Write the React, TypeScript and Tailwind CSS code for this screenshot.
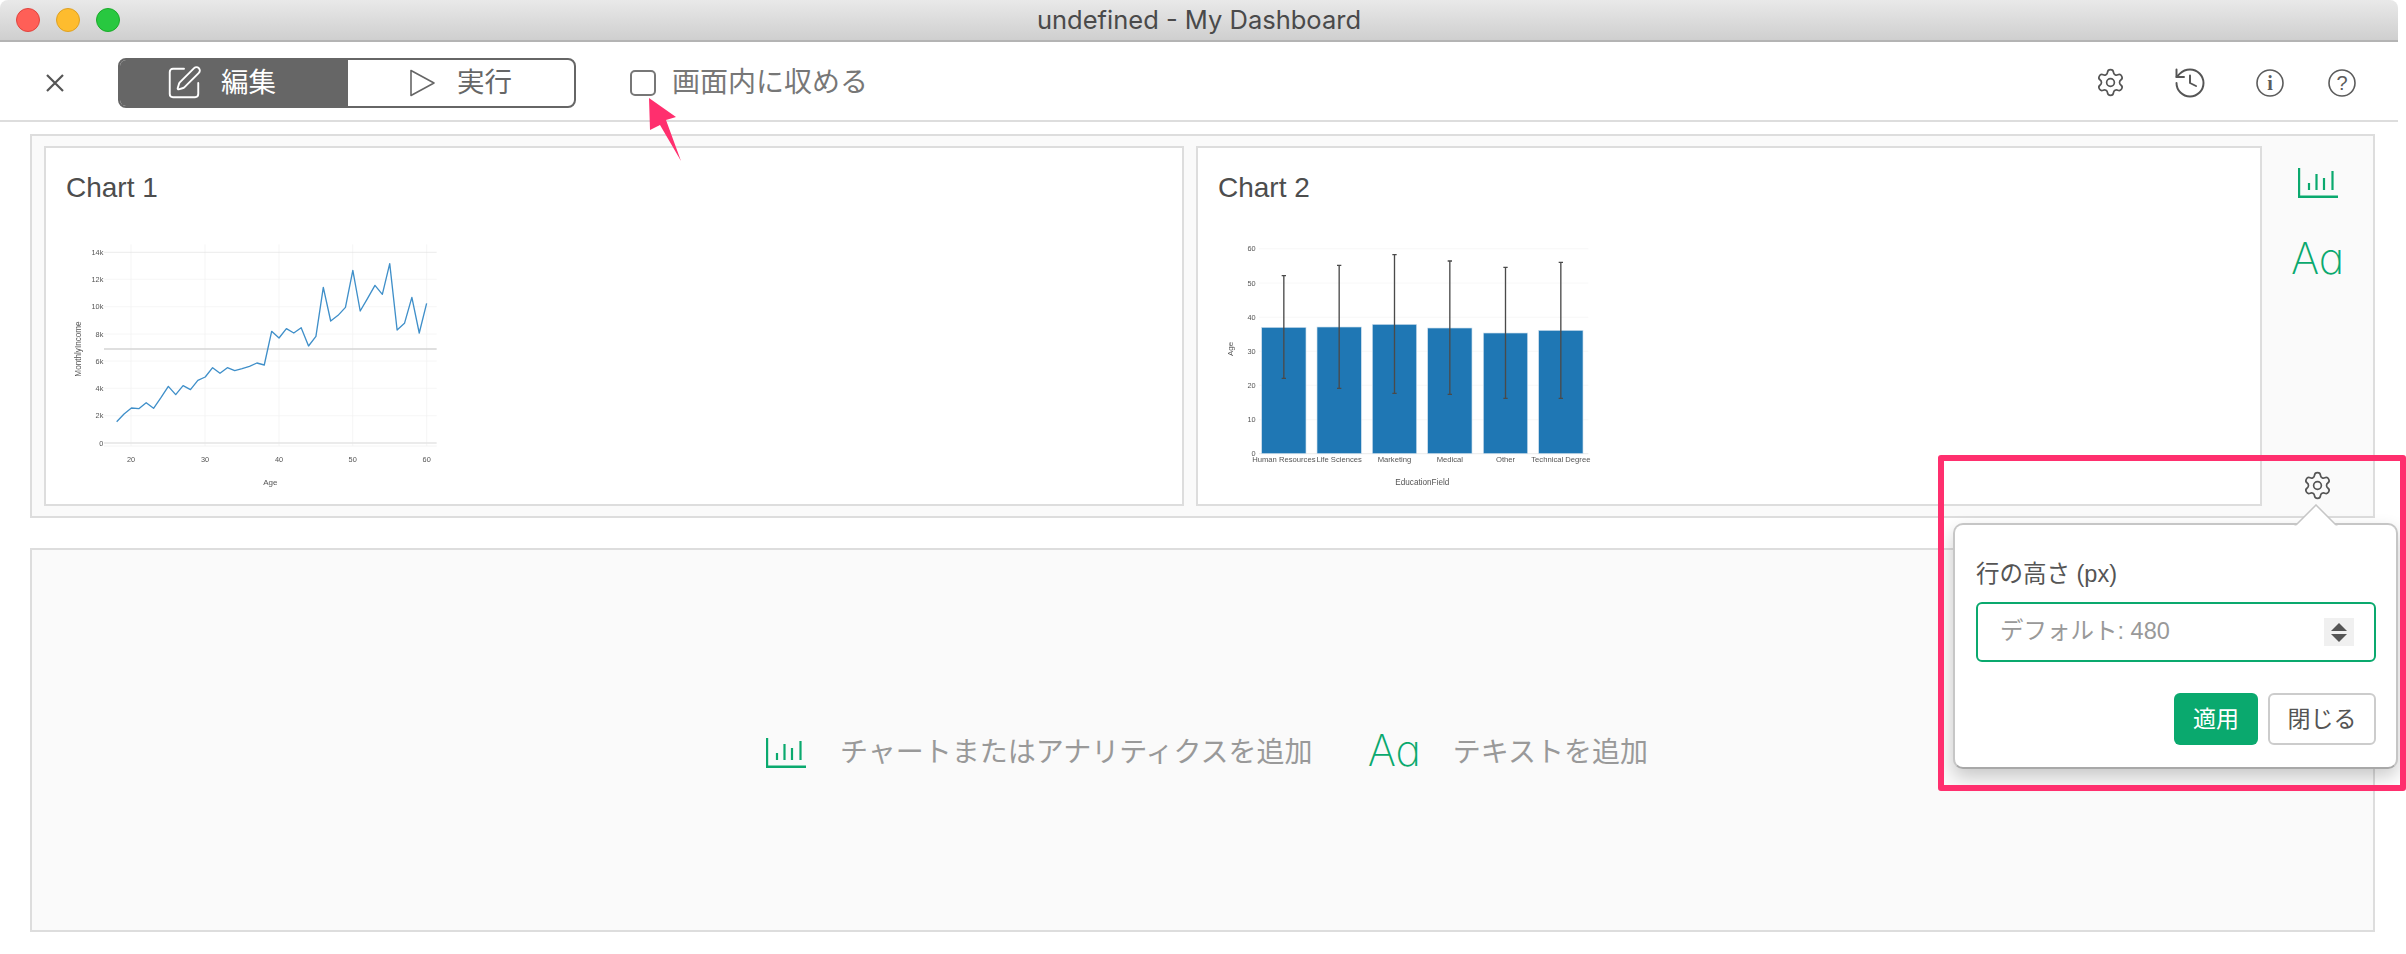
import { History, Settings, SquarePen } from 'lucide-react'

const jp = "font-['Liberation_Sans','Noto_Sans_CJK_JP',sans-serif]"

const incomeY = [845, 822, 804, 806, 788, 805, 773, 739, 764, 737, 749, 721, 711, 683, 700, 683, 692, 686, 679, 669, 675, 574, 594, 566, 579, 563, 618, 589, 442, 543, 526, 502, 391, 513, 475, 436, 463, 371, 570, 550, 472, 579, 490]
const incomePoints = incomeY.map((y, i) => `${260 + i * 22.14},${y}`).join(' ')

const yTicks = [
  { label: '14k', y: 337 },
  { label: '12k', y: 418 },
  { label: '10k', y: 500 },
  { label: '8k', y: 582 },
  { label: '6k', y: 663 },
  { label: '4k', y: 745 },
  { label: '2k', y: 827 },
  { label: '0', y: 909 },
]
const xTicks = [
  { label: '20', x: 303 },
  { label: '30', x: 525 },
  { label: '40', x: 747 },
  { label: '50', x: 968 },
  { label: '60', x: 1190 },
]

const bars = [
  { name: 'Human Resources', x: 215, top: 562, hi: 407, lo: 715 },
  { name: 'Life Sciences', x: 381, top: 561, hi: 376, lo: 745 },
  { name: 'Marketing', x: 547, top: 553, hi: 344, lo: 760 },
  { name: 'Medical', x: 713, top: 564, hi: 363, lo: 763 },
  { name: 'Other', x: 880, top: 579, hi: 382, lo: 775 },
  { name: 'Technical Degree', x: 1046, top: 571, hi: 367, lo: 775 },
]
const ageTicks = [
  { label: '60', y: 326 },
  { label: '50', y: 429 },
  { label: '40', y: 532 },
  { label: '30', y: 634 },
  { label: '20', y: 736 },
  { label: '10', y: 839 },
  { label: '0', y: 941 },
]

function LineChart() {
  return (
    <svg viewBox="120 300 1140 780" className="ml-[24px] block h-[260px] w-[380px] blur-[0.4px]" fontFamily="Liberation Sans, sans-serif" fontSize="22" fill="#555">
      {xTicks.map((t) => (
        <line key={t.x} x1={t.x} x2={t.x} y1={313} y2={918} stroke="#f0f0f0" strokeWidth="2" />
      ))}
      {yTicks.map((t) => (
        <g key={t.y}>
          <line x1={222} x2={1220} y1={t.y} y2={t.y} stroke={t.y === 337 ? '#e2e2e2' : t.y === 909 ? '#e4e4e4' : '#f1f1f1'} strokeWidth={t.y === 909 ? 5 : 2} />
          <text x={220} y={t.y + 8} textAnchor="end">{t.label}</text>
        </g>
      ))}
      <line x1={222} x2={1220} y1={918} y2={918} stroke="#eeeeee" strokeWidth="2" />
      <line x1={222} x2={1220} y1={627} y2={627} stroke="#d4d4d4" strokeWidth="4" />
      <polyline points={incomePoints} fill="none" stroke="#3f8fc9" strokeWidth="4" strokeLinejoin="round" />
      {xTicks.map((t) => (
        <text key={t.x} x={t.x} y={966} textAnchor="middle">{t.label}</text>
      ))}
      <text x={721} y={1034} textAnchor="middle" fontSize="24">Age</text>
      <text transform="translate(153 627) rotate(-90)" textAnchor="middle" fontSize="24.5">MonthlyIncome</text>
    </svg>
  )
}

function BarChart() {
  return (
    <svg viewBox="90 300 1170 780" className="ml-[22px] block h-[260px] w-[390px] blur-[0.4px]" fontFamily="Liberation Sans, sans-serif" fontSize="22" fill="#555">
      {ageTicks.map((t) => (
        <g key={t.y}>
          <line x1={207} x2={1195} y1={t.y} y2={t.y} stroke={t.y === 941 ? '#eeeeee' : '#f4f4f4'} strokeWidth={t.y === 941 ? 4 : 2} />
          <text x={197} y={t.y + 8} textAnchor="end">{t.label}</text>
        </g>
      ))}
      {bars.map((b) => (
        <g key={b.name}>
          <rect x={b.x} y={b.top} width={133} height={941 - b.top} fill="#1f77b4" stroke="#cfe0ee" strokeWidth="2" />
          <path d={`M${b.x + 66.5} ${b.hi}V${b.lo}M${b.x + 60} ${b.hi}h13M${b.x + 60} ${b.lo}h13`} stroke="#4a4a4a" strokeWidth="4" fill="none" />
          <text x={b.x + 66.5} y={966} textAnchor="middle" fontSize="23">{b.name}</text>
        </g>
      ))}
      <text x={697} y={1034} textAnchor="middle" fontSize="24.5">EducationField</text>
      <text transform="translate(129 627) rotate(-90)" textAnchor="middle" fontSize="24">Age</text>
    </svg>
  )
}

function BarIcon() {
  return (
    <svg width="40" height="30" viewBox="0 0 40 30" fill="none" stroke="#0aa96e" className="shrink-0">
      <path d="M1 0V28.7H40" strokeWidth="2.4" />
      <path d="M11 15V22M18.5 6V22M26 10V22M34.5 3V22" strokeWidth="2.2" />
    </svg>
  )
}

function AaIcon() {
  return (
    <span className="font-['Inter',sans-serif] text-[43px] leading-none text-[#0aa96e] [font-feature-settings:'cv11'] [font-weight:250]">Aa</span>
  )
}

function InfoIcon() {
  return (
    <svg width="28" height="28" viewBox="0 0 28 28" fill="none">
      <circle cx="14" cy="14" r="13" stroke="#5c5c5c" strokeWidth="1.6" />
      <text x="14" y="21" textAnchor="middle" fontFamily="Liberation Serif, serif" fontSize="20" fontWeight="700" fill="#5c5c5c">i</text>
    </svg>
  )
}

function HelpIcon() {
  return (
    <svg width="28" height="28" viewBox="0 0 28 28" fill="none">
      <circle cx="14" cy="14" r="13" stroke="#5c5c5c" strokeWidth="1.6" />
      <text x="14" y="21" textAnchor="middle" fontFamily="Liberation Sans, sans-serif" fontSize="20" fill="#5c5c5c">?</text>
    </svg>
  )
}

export default function App() {
  return (
    <div className={`relative h-[954px] w-[2406px] overflow-hidden bg-white ${jp}`}>
      <div className="w-[2398px]">
        {/* title bar */}
        <div className="grid h-[42px] grid-cols-[1fr_auto_1fr] items-center rounded-t-lg border-b-2 border-[#b4b4b4] bg-gradient-to-b from-[#e9e9e9] to-[#cfcfcf]">
          <div className="flex gap-4 pl-4">
            <div className="h-6 w-6 rounded-full border border-[#e0443e] bg-[#ff5f57]" />
            <div className="h-6 w-6 rounded-full border border-[#dea123] bg-[#febc2e]" />
            <div className="h-6 w-6 rounded-full border border-[#1aab29] bg-[#28c840]" />
          </div>
          <div className="font-['Inter',sans-serif] text-[25.5px] leading-none text-[#4a4a4a]">undefined - My Dashboard</div>
          <div />
        </div>

        {/* toolbar */}
        <div className="flex h-[80px] items-center border-b-2 border-[#dddddd] pt-[3px] pr-[42px] pl-[46px]">
          <svg width="18" height="18" viewBox="0 0 18 18" stroke="#555" strokeWidth="2.2" className="shrink-0">
            <path d="M1 1L17 17M17 1L1 17" />
          </svg>
          <div className="ml-[54px] flex h-[50px] w-[458px] overflow-hidden rounded-lg border-2 border-[#666666] text-[27.5px]">
            <div className="flex w-[228px] items-center gap-[18px] bg-[#666666] pl-[45px] text-white">
              <SquarePen size={38} strokeWidth={1.2} />
              <span>編集</span>
            </div>
            <div className="flex flex-1 items-center justify-center gap-[22px] text-[#666666]">
              <svg width="25" height="28" viewBox="0 0 25 28" fill="none" stroke="#666" strokeWidth="1.6" strokeLinejoin="round">
                <path d="M1 1.5V26.5L24 14Z" />
              </svg>
              <span>実行</span>
            </div>
          </div>
          <div className="ml-[54px] h-[26px] w-[26px] rounded-[5px] border-2 border-[#777777]" />
          <span className="ml-[16px] text-[28px] leading-none text-[#777777]">画面内に収める</span>
          <div className="ml-auto flex items-center text-[#555555]">
            <Settings size={31} strokeWidth={1.3} />
            <History size={36} strokeWidth={1.3} className="ml-[46px]" />
            <div className="ml-[48px] flex gap-[44px]">
              <InfoIcon />
              <HelpIcon />
            </div>
          </div>
        </div>

        {/* chart row */}
        <div className="mt-[12px] ml-[30px] flex h-[384px] w-[2345px] gap-[12px] border-2 border-[#dddddd] bg-[#fafafa] pt-[10px] pl-[12px]">
          <div className="h-[360px] w-[1140px] border-2 border-[#dddddd] bg-white">
            <div className="h-[92px] pt-[22px] pl-[20px] text-[28px] leading-[36px] text-[#4d4d4d]">Chart 1</div>
            <LineChart />
          </div>
          <div className="h-[360px] w-[1066px] border-2 border-[#dddddd] bg-white">
            <div className="h-[92px] pt-[22px] pl-[20px] text-[28px] leading-[36px] text-[#4d4d4d]">Chart 2</div>
            <BarChart />
          </div>
          <div className="ml-[-12px] flex h-[360px] flex-1 flex-col items-center pt-[22px] pb-[5px]">
            <BarIcon />
            <div className="mt-[39px]">
              <AaIcon />
            </div>
            <Settings size={31} strokeWidth={1.3} className="mt-auto text-[#555555]" />
          </div>
        </div>

        {/* empty row */}
        <div className="mt-[30px] ml-[30px] flex h-[384px] w-[2345px] items-center justify-center border-2 border-[#dddddd] bg-[#fafafa] pt-[26px] pl-[9px] text-[28px] text-[#999999]">
          <BarIcon />
          <span className="ml-[34px]">チャートまたはアナリティクスを追加</span>
          <div className="ml-[55px]">
            <AaIcon />
          </div>
          <span className="ml-[32px]">テキストを追加</span>
        </div>
      </div>

      {/* row height popover */}
      <div className="absolute top-[523px] left-[1953px] h-[246px] w-[445px] rounded-[10px] border-2 border-[#c6c6c6] border-b-[#a8a8a8] bg-white pt-[34px] pl-[21px] shadow-[0_8px_18px_rgba(0,0,0,0.2)]">
        <svg width="44" height="23" viewBox="0 0 44 23" className="absolute top-[-21px] left-[339px]">
          <path d="M1 22L22 1L43 22" fill="white" stroke="#c6c6c6" strokeWidth="1.5" />
          <path d="M1 23H43" stroke="white" strokeWidth="3" />
        </svg>
        <div className="text-[23.5px] leading-[30px] text-[#555555]">行の高さ (px)</div>
        <div className="mt-[13px] flex h-[60px] w-[400px] items-center rounded-[6px] border-2 border-[#0aa96e] pr-[20px] pl-[22px]">
          <input readOnly placeholder="デフォルト: 480" className="min-w-0 flex-1 bg-transparent text-[23.5px] outline-none placeholder:text-[#999999]" />
          <div className="flex h-[28px] w-[30px] flex-col items-center justify-center gap-[3px] bg-[#f0f0f0]">
            <div className="h-0 w-0 border-x-[8px] border-b-[8px] border-x-transparent border-b-[#555555]" />
            <div className="h-0 w-0 border-x-[8px] border-t-[8px] border-x-transparent border-t-[#555555]" />
          </div>
        </div>
        <div className="mt-[31px] flex w-[400px] justify-end gap-[10px] text-[23px]">
          <div className="flex h-[52px] w-[84px] items-center justify-center rounded-[6px] bg-[#0aa96e] text-white">適用</div>
          <div className="flex h-[52px] w-[108px] items-center justify-center rounded-[6px] border-2 border-[#cccccc] bg-white text-[#555555]">閉じる</div>
        </div>
      </div>

      {/* annotations */}
      <div className="absolute top-[455px] left-[1938px] h-[336px] w-[468px] rounded-[3px] border-[6px] border-[#ff2f6e]" />
      <svg width="44" height="72" viewBox="640 95 44 72" className="absolute top-[95px] left-[640px]">
        <polygon points="649,98 676,117 666,120 681,161 660,125 650,130" fill="#ff2f6e" />
      </svg>
    </div>
  )
}
